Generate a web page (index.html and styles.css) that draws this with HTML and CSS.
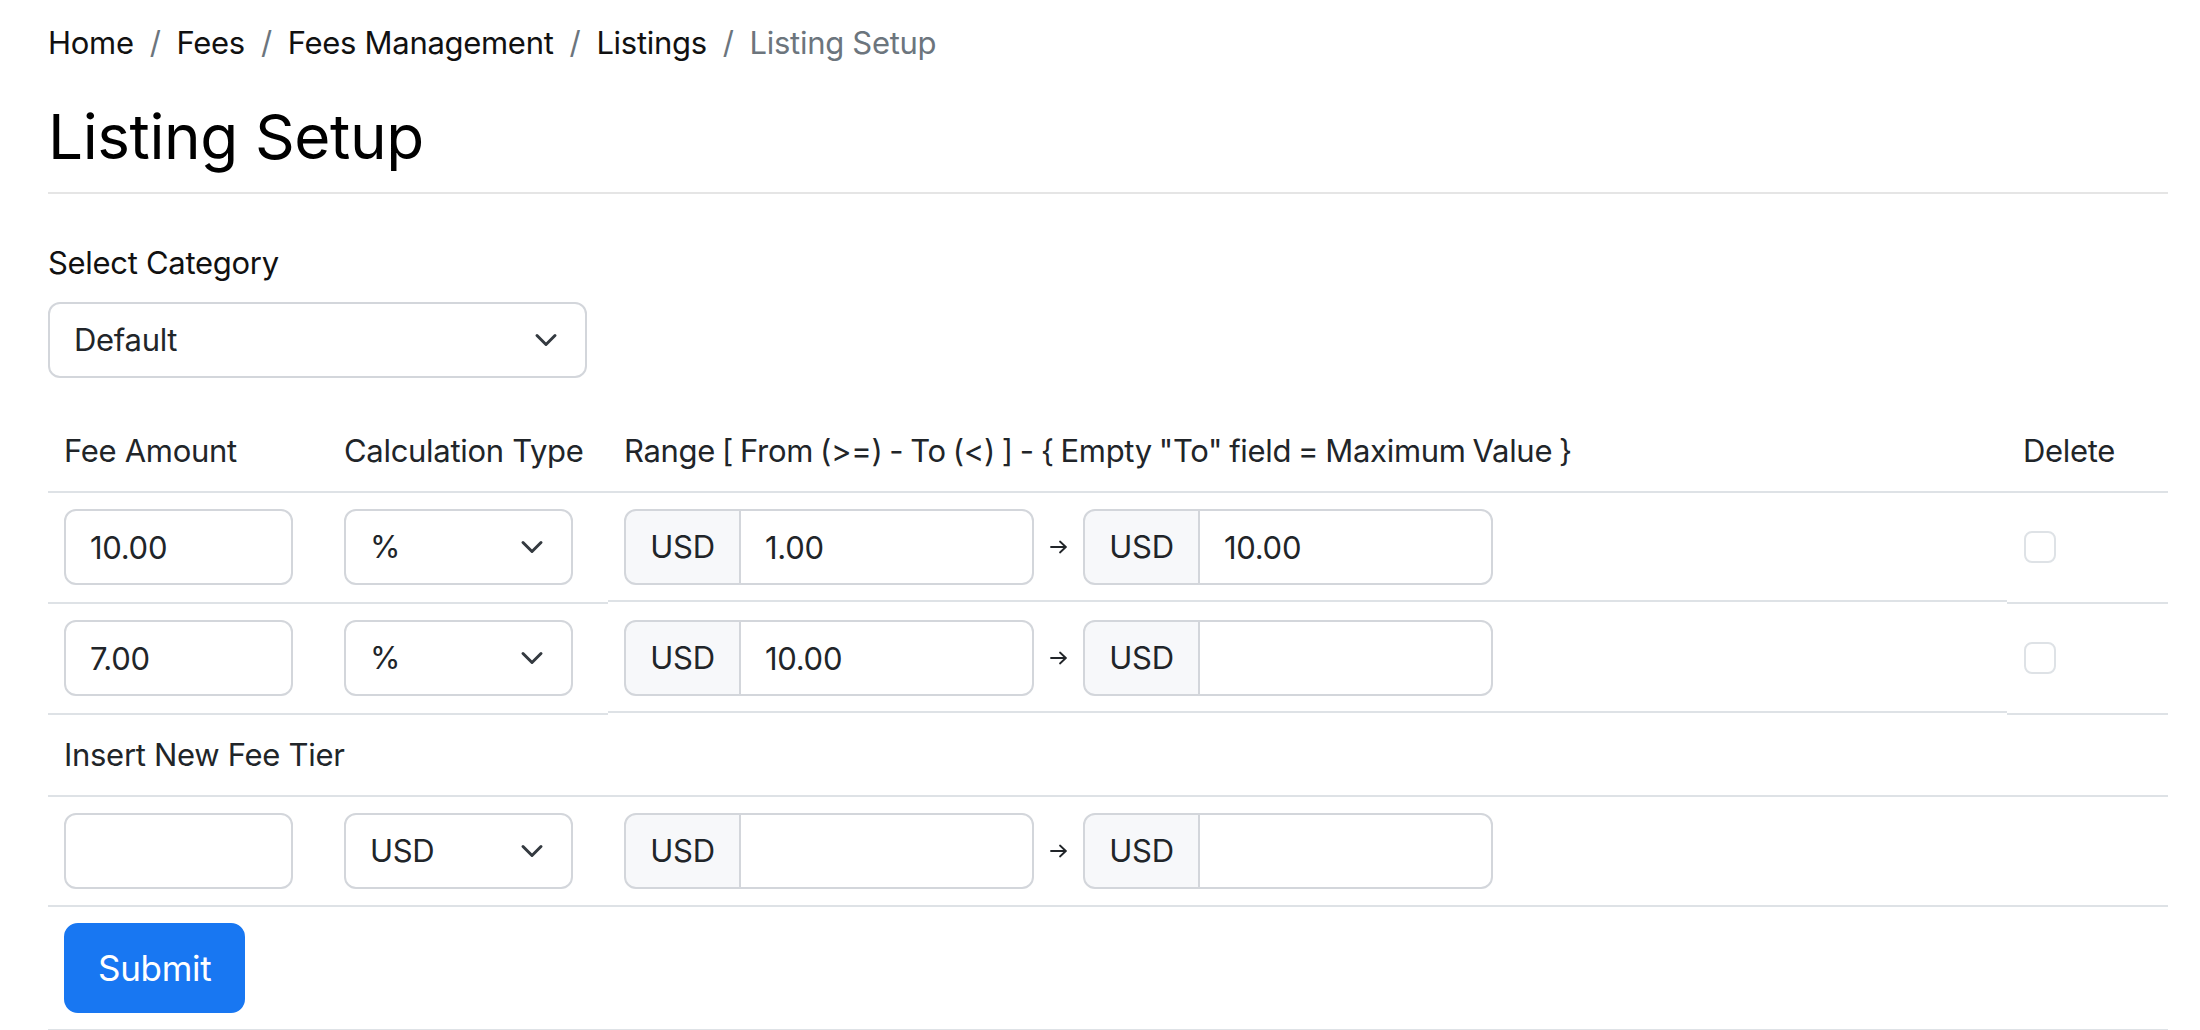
FILE: index.html
```html
<!DOCTYPE html>
<html lang="en">
<head>
<meta charset="utf-8">
<title>Listing Setup</title>
<link rel="stylesheet" href="styles.css">
</head>
<body>
<div class="page">
  <nav aria-label="breadcrumb">
    <ol class="breadcrumb">
      <li class="crumb">Home</li>
      <li class="crumb">Fees</li>
      <li class="crumb">Fees Management</li>
      <li class="crumb">Listings</li>
      <li class="crumb active">Listing Setup</li>
    </ol>
  </nav>
  <h1 class="title">Listing Setup</h1>

  <label class="field-label" for="category">Select Category</label>
  <div class="select-wrap select-wide">
    <select id="category" class="select"><option>Default</option></select>
    <svg class="chevron" viewBox="0 0 16 16" width="24" height="24"><path d="M2 5l6 6 6-6" fill="none" stroke="#343a40" stroke-width="2" stroke-linecap="round" stroke-linejoin="round"/></svg>
  </div>

  <table class="fees">
    <colgroup>
      <col class="c-amount"><col class="c-type"><col class="c-range"><col class="c-del">
    </colgroup>
    <thead>
      <tr>
        <th>Fee Amount</th>
        <th>Calculation Type</th>
        <th class="range-head">Range [ From (&gt;=) - To (&lt;) ] - { Empty "To" field = Maximum Value }</th>
        <th>Delete</th>
      </tr>
    </thead>
    <tbody>
      <tr class="tier">
        <td><input class="input small" type="text" value="10.00"></td>
        <td>
          <div class="select-wrap select-small">
            <select class="select"><option>%</option></select>
            <svg class="chevron" viewBox="0 0 16 16" width="24" height="24"><path d="M2 5l6 6 6-6" fill="none" stroke="#343a40" stroke-width="2" stroke-linecap="round" stroke-linejoin="round"/></svg>
          </div>
        </td>
        <td class="range shifted">
          <div class="range-row">
            <div class="group"><span class="addon">USD</span><input class="input grow" type="text" value="1.00"></div>
            <span class="arrow"><svg viewBox="0 0 18 14" width="18" height="14"><path d="M1 7h15M10 1.5L15.8 7 10 12.5" fill="none" stroke="#212529" stroke-width="1.8" stroke-linecap="round" stroke-linejoin="round"/></svg></span>
            <div class="group"><span class="addon">USD</span><input class="input grow" type="text" value="10.00"></div>
          </div>
        </td>
        <td><input class="check" type="checkbox" aria-label="Delete"></td>
      </tr>
      <tr class="tier">
        <td><input class="input small" type="text" value="7.00"></td>
        <td>
          <div class="select-wrap select-small">
            <select class="select"><option>%</option></select>
            <svg class="chevron" viewBox="0 0 16 16" width="24" height="24"><path d="M2 5l6 6 6-6" fill="none" stroke="#343a40" stroke-width="2" stroke-linecap="round" stroke-linejoin="round"/></svg>
          </div>
        </td>
        <td class="range shifted">
          <div class="range-row">
            <div class="group"><span class="addon">USD</span><input class="input grow" type="text" value="10.00"></div>
            <span class="arrow"><svg viewBox="0 0 18 14" width="18" height="14"><path d="M1 7h15M10 1.5L15.8 7 10 12.5" fill="none" stroke="#212529" stroke-width="1.8" stroke-linecap="round" stroke-linejoin="round"/></svg></span>
            <div class="group"><span class="addon">USD</span><input class="input grow" type="text" value=""></div>
          </div>
        </td>
        <td><input class="check" type="checkbox" aria-label="Delete"></td>
      </tr>
      <tr>
        <td colspan="4">Insert New Fee Tier</td>
      </tr>
      <tr>
        <td><input class="input small" type="text" value=""></td>
        <td>
          <div class="select-wrap select-small">
            <select class="select"><option>USD</option></select>
            <svg class="chevron" viewBox="0 0 16 16" width="24" height="24"><path d="M2 5l6 6 6-6" fill="none" stroke="#343a40" stroke-width="2" stroke-linecap="round" stroke-linejoin="round"/></svg>
          </div>
        </td>
        <td class="range">
          <div class="range-row">
            <div class="group"><span class="addon">USD</span><input class="input grow" type="text" value=""></div>
            <span class="arrow"><svg viewBox="0 0 18 14" width="18" height="14"><path d="M1 7h15M10 1.5L15.8 7 10 12.5" fill="none" stroke="#212529" stroke-width="1.8" stroke-linecap="round" stroke-linejoin="round"/></svg></span>
            <div class="group"><span class="addon">USD</span><input class="input grow" type="text" value=""></div>
          </div>
        </td>
        <td></td>
      </tr>
      <tr>
        <td colspan="4"><button class="btn" type="submit">Submit</button></td>
      </tr>
    </tbody>
  </table>
</div>
</body>
</html>
```

FILE: styles.css
```css
* { box-sizing: border-box; }

html, body {
  margin: 0;
  background: #ffffff;
}

body {
  font-family: Inter, "Noto Sans", sans-serif;
  font-size: 31px;
  line-height: 48px;
  letter-spacing: -0.3px;
  color: #111111;
}

.page {
  width: 2120px;
  margin-left: 48px;
  padding-top: 19px;
}

.breadcrumb {
  display: flex;
  list-style: none;
  margin: 0 0 31px;
  padding: 0;
}

.crumb + .crumb::before {
  content: "/";
  color: #6c757d;
  padding: 0 16px;
}

.crumb.active { color: #6c757d; }

.title {
  margin: 0;
  font-size: 62px;
  line-height: 77px;
  font-weight: 400;
  letter-spacing: -0.4px;
  color: #000000;
  padding-bottom: 17px;
  border-bottom: 2px solid #e5e5e5;
}

.field-label {
  display: block;
  margin-top: 45px;
  margin-bottom: 15px;
}

.select-wrap {
  position: relative;
  display: inline-block;
  vertical-align: middle;
}

.select-wide { width: 539px; }
.select-small { width: 229px; }

.select {
  -webkit-appearance: none;
  appearance: none;
  width: 100%;
  height: 76px;
  padding: 0 72px 0 24px;
  font: inherit;
  letter-spacing: inherit;
  color: #212529;
  background: #ffffff;
  border: 2px solid #d3d6db;
  border-radius: 12px;
  display: block;
}

.chevron {
  position: absolute;
  right: 29px;
  top: 50%;
  margin-top: -12px;
  pointer-events: none;
}

.fees {
  margin-top: 33px;
  width: 2120px;
  table-layout: fixed;
  border-collapse: separate;
  border-spacing: 0;
  color: #212529;
}

.c-amount { width: 280px; }
.c-type { width: 280px; }
.c-range { width: 1399px; }
.c-del { width: 161px; }

.fees th,
.fees td {
  padding: 16px;
  border-bottom: 2px solid #dee2e6;
  text-align: left;
  font-weight: 400;
  vertical-align: middle;
}

.fees tr.tier td { padding-bottom: 17px; }

.fees th.range-head { word-spacing: -1.5px; }

.fees td.shifted {
  border-bottom-color: transparent;
  background: linear-gradient(#dee2e6, #dee2e6) left bottom / 100% 2px no-repeat;
}

.input {
  display: block;
  height: 76px;
  padding: 0 24px;
  font: inherit;
  letter-spacing: inherit;
  color: #212529;
  background: #ffffff;
  border: 2px solid #d3d6db;
  border-radius: 12px;
  outline: none;
}

.input.small { width: 229px; }

.range-row {
  display: flex;
  align-items: center;
}

.group {
  display: flex;
  width: 410px;
  height: 76px;
}

.addon {
  flex: 0 0 117px;
  display: flex;
  align-items: center;
  justify-content: center;
  background: #f7f8fa;
  border: 2px solid #d3d6db;
  border-radius: 12px 0 0 12px;
}

.input.grow {
  flex: 1 1 auto;
  min-width: 0;
  height: 76px;
  margin-left: -2px;
  border-radius: 0 12px 12px 0;
}

.arrow {
  flex: 0 0 49px;
  display: flex;
  justify-content: center;
  align-items: center;
}

.arrow svg { display: block; }

.check {
  -webkit-appearance: none;
  appearance: none;
  display: block;
  width: 32px;
  height: 32px;
  margin: 0 0 0 1px;
  border: 2px solid #dee2e6;
  border-radius: 8px;
  background: #ffffff;
}

.btn {
  font: inherit;
  font-size: 35px;
  line-height: 52px;
  letter-spacing: -0.3px;
  color: #ffffff;
  background: #1877f2;
  border: 2px solid #1877f2;
  border-radius: 14px;
  padding: 17px 32px;
}
```
